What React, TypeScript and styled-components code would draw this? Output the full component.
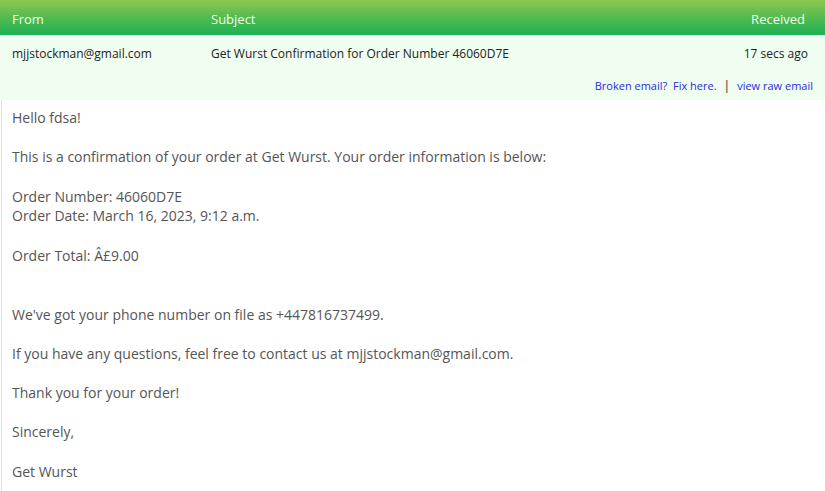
import React from "react";
import styled, { createGlobalStyle } from "styled-components";

const Global = createGlobalStyle`
  html, body { margin: 0; padding: 0; background: #fff; }
  body { font-family: "Open Sans", "Noto Sans", sans-serif; }
`;

const Page = styled.div`
  width: 825px;
  display: flex;
  flex-direction: column;
`;

const HeaderBar = styled.div`
  display: grid;
  grid-template-columns: 199px 1fr auto;
  align-items: center;
  box-sizing: border-box;
  height: 35px;
  padding: 2px 20px 0 12px;
  background: linear-gradient(to bottom, #8cc84f 0%, #52bb50 50%, #1db154 100%);
  color: #f2fbef;
  font-size: 13px;
`;

const Meta = styled.div`
  background: #effef0;
  display: flex;
  flex-direction: column;
`;

const MetaRow = styled.div`
  display: grid;
  grid-template-columns: 199px 1fr auto;
  align-items: center;
  height: 37px;
  padding: 0 17px 0 12px;
  color: #222;
  font-size: 12px;
`;

const Links = styled.div`
  display: flex;
  justify-content: flex-end;
  align-items: center;
  gap: 7px;
  box-sizing: border-box;
  height: 28px;
  padding: 0 12px 2px 0;
  font-size: 11px;
`;

const LinkText = styled.a`
  color: #2b2bdc;
  text-decoration: none;
`;

const Sep = styled.span`
  color: #222;
  font-size: 12px;
`;

const Body = styled.div`
  margin-left: 1px;
  border-left: 1px solid #e2e2e2;
  padding: 8px 11px 0 10px;
  color: #555;
  font-size: 14px;
  line-height: 19.65px;
`;

const Para = styled.p<{ $gap?: number }>`
  margin: 0 0 ${(p) => p.$gap ?? 19.65}px;
`;

export default function App() {
  return (
    <Page>
      <Global />
      <HeaderBar>
        <span>From</span>
        <span>Subject</span>
        <span>Received</span>
      </HeaderBar>
      <Meta>
        <MetaRow>
          <span>mjjstockman@gmail.com</span>
          <span>Get Wurst Confirmation for Order Number 46060D7E</span>
          <span>17 secs ago</span>
        </MetaRow>
        <Links>
          <LinkText href="#">Broken email?&nbsp; Fix here.</LinkText>
          <Sep>|</Sep>
          <LinkText href="#">view raw email</LinkText>
        </Links>
      </Meta>
      <Body>
        <Para>Hello fdsa!</Para>
        <Para>This is a confirmation of your order at Get Wurst. Your order information is below:</Para>
        <Para>
          Order Number: 46060D7E
          <br />
          Order Date: March 16, 2023, 9:12 a.m.
        </Para>
        <Para $gap={39.3}>Order Total: Â£9.00</Para>
        <Para>We've got your phone number on file as +447816737499.</Para>
        <Para>If you have any questions, feel free to contact us at mjjstockman@gmail.com.</Para>
        <Para>Thank you for your order!</Para>
        <Para>Sincerely,</Para>
        <Para>Get Wurst</Para>
      </Body>
    </Page>
  );
}
